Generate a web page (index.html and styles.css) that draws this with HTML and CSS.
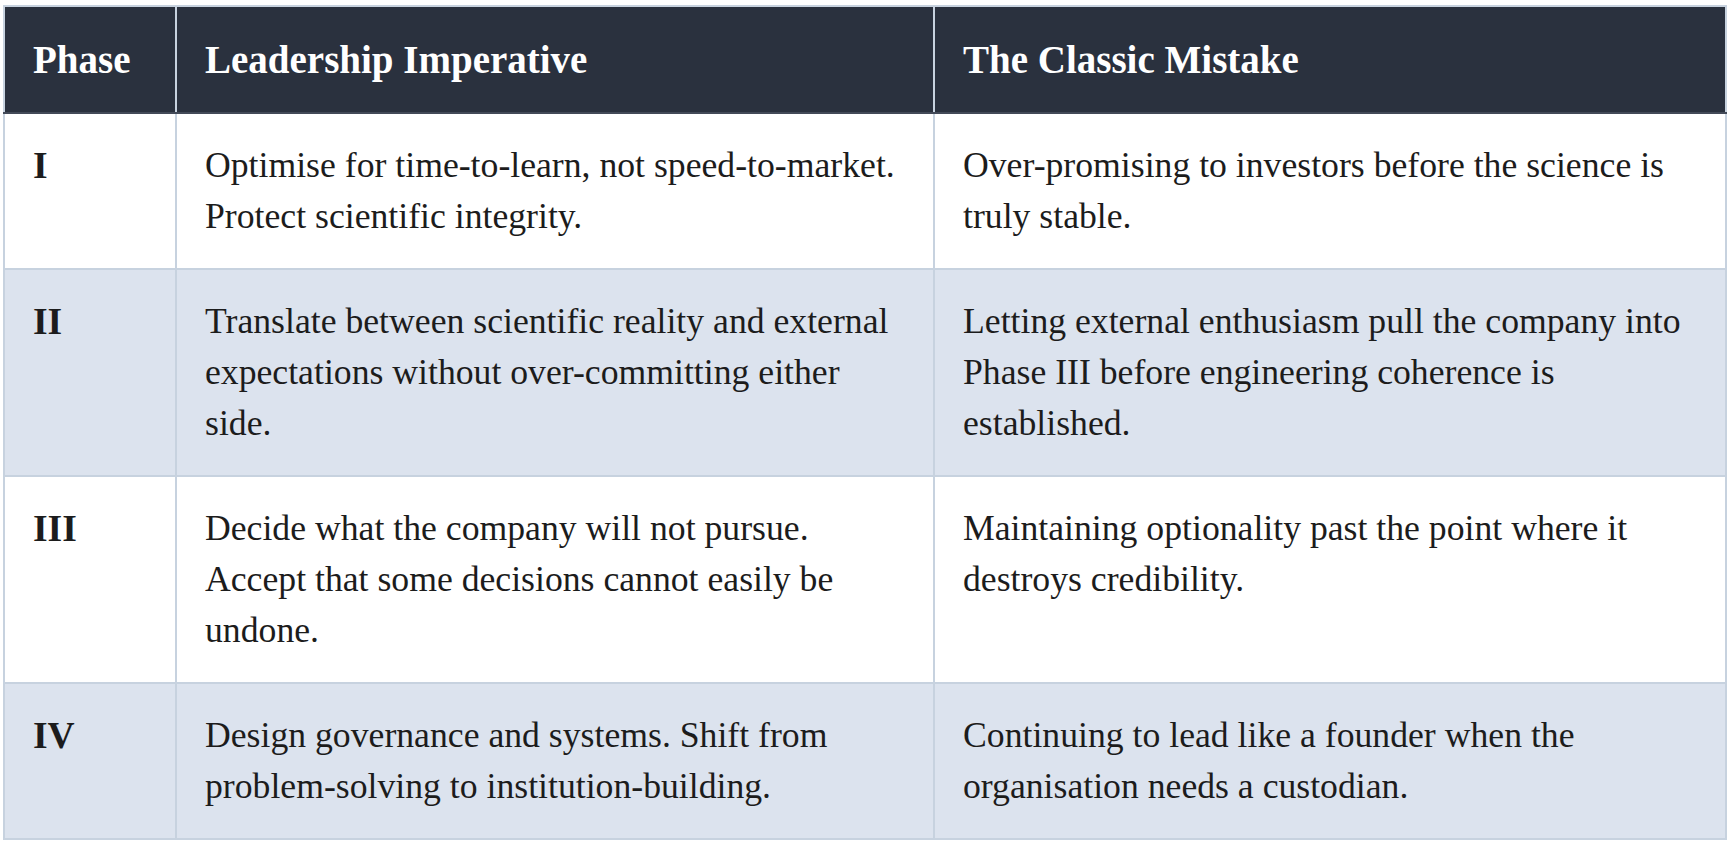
FILE: index.html
```html
<!DOCTYPE html>
<html lang="en">
<head>
<meta charset="utf-8">
<title>Leadership Phases</title>
<link rel="stylesheet" href="styles.css">
</head>
<body>
<table class="phases">
  <colgroup>
    <col class="c-phase">
    <col class="c-imp">
    <col class="c-mistake">
  </colgroup>
  <thead>
    <tr>
      <th>Phase</th>
      <th>Leadership Imperative</th>
      <th>The Classic Mistake</th>
    </tr>
  </thead>
  <tbody>
    <tr>
      <td class="phase">I</td>
      <td>Optimise for time-to-learn, not speed-to-market. Protect scientific integrity.</td>
      <td>Over-promising to investors before the science is truly stable.</td>
    </tr>
    <tr class="alt">
      <td class="phase">II</td>
      <td>Translate between scientific reality and external expectations without over-committing either side.</td>
      <td>Letting external enthusiasm pull the company into Phase III before engineering coherence is established.</td>
    </tr>
    <tr>
      <td class="phase">III</td>
      <td>Decide what the company will not pursue. Accept that some decisions cannot easily be undone.</td>
      <td>Maintaining optionality past the point where it destroys credibility.</td>
    </tr>
    <tr class="alt">
      <td class="phase">IV</td>
      <td>Design governance and systems. Shift from problem-solving to institution-building.</td>
      <td>Continuing to lead like a founder when the organisation needs a custodian.</td>
    </tr>
  </tbody>
</table>
</body>
</html>
```

FILE: styles.css
```css
html, body {
  margin: 0;
  padding: 0;
  background: #ffffff;
}

body {
  font-family: "Liberation Serif", "Times New Roman", serif;
  color: #1c1c1c;
}

.phases {
  margin: 5px 0 0 3px;
  width: 1722px;
  border-collapse: collapse;
  table-layout: fixed;
}

.c-phase { width: 172px; }
.c-imp { width: 758px; }
.c-mistake { width: 792px; }

.phases th,
.phases td {
  border: 2px solid #c7d2df;
  text-align: left;
  vertical-align: top;
  padding: 26px 28px;
  line-height: 51px;
}

.phases th {
  background: #2a313e;
  color: #ffffff;
  font-weight: bold;
  font-size: 39px;
  border-bottom: 2px solid #434a58;
  padding-top: 27px;
  padding-bottom: 27px;
}

.phases td {
  font-size: 35.7px;
}

.phases td.phase {
  font-weight: bold;
  font-size: 37.5px;
}

.phases tr.alt td {
  background: #dce3ee;
}
```
